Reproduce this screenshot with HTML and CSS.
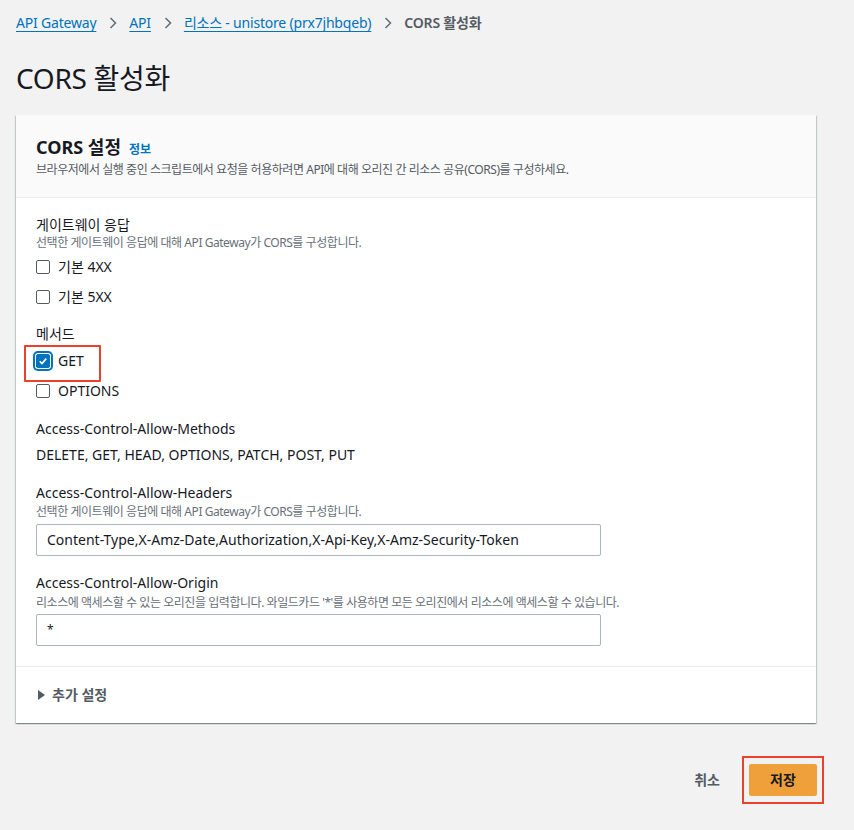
FILE: index.html
```html
<!DOCTYPE html>
<html lang="ko">
<head>
<meta charset="utf-8">
<link rel="stylesheet" href="styles.css">
</head>
<body>
<div class="page">
  <nav class="crumbs">
    <a class="crumb-link">API Gateway</a>
    <svg class="chev" viewBox="0 0 8 12" width="8" height="12"><path d="M1.5 1l5 5-5 5" fill="none" stroke="#687078" stroke-width="1.6"/></svg>
    <a class="crumb-link">API</a>
    <svg class="chev" viewBox="0 0 8 12" width="8" height="12"><path d="M1.5 1l5 5-5 5" fill="none" stroke="#687078" stroke-width="1.6"/></svg>
    <a class="crumb-link">리소스 - unistore (prx7jhbqeb)</a>
    <svg class="chev" viewBox="0 0 8 12" width="8" height="12"><path d="M1.5 1l5 5-5 5" fill="none" stroke="#687078" stroke-width="1.6"/></svg>
    <span class="crumb-current">CORS 활성화</span>
  </nav>

  <h1 class="title">CORS 활성화</h1>

  <section class="card">
    <header class="card-head">
      <h2 class="card-title">CORS 설정<a class="info">정보</a></h2>
      <p class="card-desc">브라우저에서 실행 중인 스크립트에서 요청을 허용하려면 API에 대해 오리진 간 리소스 공유(CORS)를 구성하세요.</p>
    </header>

    <div class="card-body">
      <div class="field">
        <div class="label">게이트웨이 응답</div>
        <div class="desc">선택한 게이트웨이 응답에 대해 API Gateway가 CORS를 구성합니다.</div>
        <label class="check-row"><span class="box"></span>기본 4XX</label>
        <label class="check-row"><span class="box"></span>기본 5XX</label>
      </div>

      <div class="field methods">
        <div class="label">메서드</div>
        <label class="check-row highlighted"><span class="box checked"><svg viewBox="0 0 14 14" width="14" height="14"><path d="M3.2 7.3l2.6 2.6 5-5.6" fill="none" stroke="#fff" stroke-width="2"/></svg></span>GET</label>
        <label class="check-row"><span class="box"></span>OPTIONS</label>
      </div>

      <div class="field allow-methods">
        <div class="label">Access-Control-Allow-Methods</div>
        <div class="value">DELETE, GET, HEAD, OPTIONS, PATCH, POST, PUT</div>
      </div>

      <div class="field allow-headers">
        <div class="label">Access-Control-Allow-Headers</div>
        <div class="desc">선택한 게이트웨이 응답에 대해 API Gateway가 CORS를 구성합니다.</div>
        <div class="input">Content-Type,X-Amz-Date,Authorization,X-Api-Key,X-Amz-Security-Token</div>
      </div>

      <div class="field allow-origin">
        <div class="label">Access-Control-Allow-Origin</div>
        <div class="desc">리소스에 액세스할 수 있는 오리진을 입력합니다. 와일드카드 '*'를 사용하면 모든 오리진에서 리소스에 액세스할 수 있습니다.</div>
        <div class="input star">*</div>
      </div>
    </div>

    <footer class="card-foot">
      <span class="caret"></span>추가 설정
    </footer>
  </section>

  <div class="actions">
    <span class="cancel">취소</span>
    <div class="save-wrap"><span class="save">저장</span></div>
  </div>
</div>
</body>
</html>
```

FILE: styles.css
```css
* { box-sizing: border-box; }
html, body { margin: 0; padding: 0; background: #f2f2f2; }
body {
  font-family: "Noto Sans", "Noto Sans CJK KR", sans-serif;
  font-size: 14px;
  line-height: 20px;
  color: #16191f;
}
.page { width: 808px; margin-left: 16px; padding-top: 13px; }

.crumbs { display: flex; align-items: center; height: 20px; font-size: 14px; letter-spacing: -0.2px; }
.crumb-link { color: #0073bb; text-decoration: underline; text-underline-offset: 3px; }
.chev { margin: 0 12px 0 13px; }
.crumb-current { color: #545b64; font-weight: 600; }

.title { margin: 27px 0 19px; font-size: 28px; line-height: 36px; font-weight: 400; letter-spacing: -0.3px; }

.card {
  width: 800px;
  background: #fff;
  box-shadow: 0 1px 1px 0 rgba(0,28,36,.3), 1px 1px 1px 0 rgba(0,28,36,.15), -1px 1px 1px 0 rgba(0,28,36,.15);
}
.card-head {
  background: #fafafa;
  border-bottom: 1px solid #eaeded;
  padding: 20px 20px 19px;
}
.card-title { margin: 0; height: 24px; font-size: 18px; line-height: 24px; font-weight: 700; }
.info { color: #0073bb; font-size: 12px; line-height: 16px; font-weight: 700; margin-left: 8px; }
.card-desc { margin: 3px 0 0; font-size: 12px; line-height: 16px; color: #545b64; letter-spacing: -0.45px; }

.card-body { padding: 17px 20px 20px; border-bottom: 1px solid #eaeded; }
.label { font-size: 14px; line-height: 20px; }
.desc { font-size: 12px; line-height: 16px; color: #687078; letter-spacing: -0.45px; }

.check-row { display: flex; align-items: center; height: 30px; gap: 8px; position: relative; }
.field .desc + .check-row { margin-top: 1px; }
.box {
  width: 14px; height: 14px;
  border: 1px solid #545b64; border-radius: 2px; background: #fff;
  display: inline-flex; align-items: center; justify-content: center;
}
.box.checked {
  background: #0073bb; border-color: #0073bb;
  box-shadow: 0 0 0 1px #fff, 0 0 0 3px #0073bb;
}
.box svg { display: block; }
.highlighted::before {
  content: "";
  position: absolute;
  left: -12px; top: -1px;
  width: 73px; height: 33px;
  border: 2px solid #e8412c;
  border-radius: 1px;
}

.methods { margin-top: 12px; }
.methods .label { margin-bottom: 2px; }
.allow-methods { margin-top: 13px; }
.allow-methods .value { margin-top: 6px; line-height: 20px; }
.allow-headers { margin-top: 18px; }
.allow-headers .desc { margin-top: 1px; }
.allow-origin { margin-top: 17px; }
.allow-origin .desc { margin-top: 2px; }

.input {
  width: 565px; height: 32px;
  border: 1px solid #aab7b8; border-radius: 2px;
  padding: 5px 10px;
  line-height: 20px;
  background: #fff;
  margin-top: 4px;
}
.allow-origin .input { margin-top: 3px; }
.input.star { font-size: 12px; }

.card-foot {
  padding: 18px 20px 18px 22px;
  display: flex; align-items: center;
  font-weight: 700; color: #545b64; line-height: 20px;
}
.caret {
  width: 0; height: 0;
  border-left: 7px solid #545b64;
  border-top: 5px solid transparent;
  border-bottom: 5px solid transparent;
  margin-right: 7px;
}

.actions {
  display: flex; justify-content: flex-end; align-items: center;
  margin-top: 33px;
}
.cancel { font-weight: 700; color: #545b64; margin-right: 22px; }
.save-wrap { border: 2px solid #e8412c; padding: 6px 5px; }
.save {
  display: block;
  background: #f0a03a; color: #16191f; font-weight: 700;
  height: 32px; line-height: 32px; padding: 0 20px; border-radius: 2px;
  width: 68px; text-align: center;
}
```
